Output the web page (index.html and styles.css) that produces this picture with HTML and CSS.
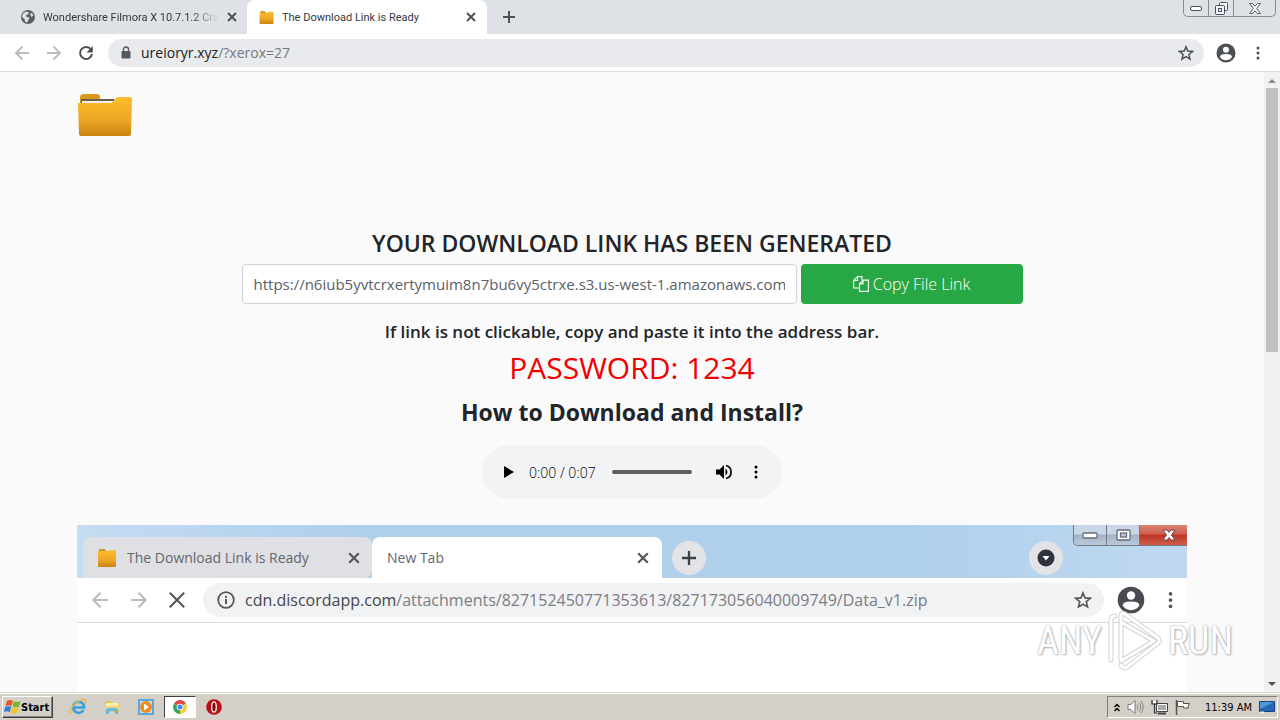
FILE: index.html
```html
<!DOCTYPE html>
<html lang="en">
<head>
<meta charset="utf-8">
<title>The Download Link is Ready</title>
<link rel="stylesheet" href="styles.css">
</head>
<body>
<svg class="defs" aria-hidden="true">
  <defs>
    <linearGradient id="gold" x1="0" y1="0" x2="0" y2="1">
      <stop offset="0" stop-color="#fdbf2d"/><stop offset=".6" stop-color="#eda525"/><stop offset="1" stop-color="#c98410"/>
    </linearGradient>
    <symbol id="folder" viewBox="0 0 56 44">
      <path d="M3 12V4q0-3 4-3h13q3 0 3 3v2h14v6z" fill="#d99a1c"/>
      <path d="M4 6h33v6H4z" fill="#69604a"/>
      <path d="M5 8h31v5H5z" fill="#f4f2ea"/>
      <path d="M1 10h32q3 0 5-4 1-2 4-2h11q2 0 2 2l-1 35q0 2-2 2H4q-2 0-2-2z" fill="url(#gold)"/>
    </symbol>
    <symbol id="close" viewBox="0 0 10 10"><path d="M1 1l8 8M9 1L1 9" fill="none" stroke="currentColor" stroke-width="1.9"/></symbol>
    <symbol id="arrow" viewBox="0 0 16 16"><path d="M15 8H2M8.500 1.500L2 8l6.500 6.500" fill="none" stroke="currentColor" stroke-width="1.800"/></symbol>
    <symbol id="plus" viewBox="0 0 12 12"><path d="M6 0v12M0 6h12" fill="none" stroke="currentColor" stroke-width="2"/></symbol>
    <symbol id="star" viewBox="0 0 16 16"><path d="M8 1.800l1.800 4.300 4.700.4-3.600 3 1.100 4.600L8 11.700l-4 2.400 1.100-4.600-3.600-3 4.700-.4z" fill="none" stroke="currentColor" stroke-width="1.500"/></symbol>
    <symbol id="person" viewBox="0 0 20 20">
      <circle cx="10" cy="10" r="9.500" fill="currentColor"/>
      <circle cx="10" cy="6.800" r="3" fill="#fff"/>
      <path d="M4 14q0-3 6-3t6 3q-2.200 3.300-6 3.300T4 14z" fill="#fff"/>
    </symbol>
    <symbol id="dots" viewBox="0 0 4 16"><circle cx="2" cy="3" r="1.500" fill="currentColor"/><circle cx="2" cy="8" r="1.500" fill="currentColor"/><circle cx="2" cy="13" r="1.500" fill="currentColor"/></symbol>
  </defs>
</svg>

<header class="browser">
  <nav class="tabs" aria-label="Tabs">
    <div class="tab">
      <svg class="favicon" viewBox="0 0 14 14"><circle cx="7" cy="7" r="7" fill="#5a5e63"/><path d="M2 3.500L5 1.500l3 1-1 2-2 .5.500 2 3 .5-1 2.500-1.500 2.500-2-1-.5-2.500L1 7zM9 4l2-1 1.500 2.500-2 1.500z" fill="#dee1e6"/></svg>
      <span class="tab-title fade">Wondershare Filmora X 10.7.1.2 Cra</span>
      <button class="icon-button" aria-label="Close tab"><svg class="s10"><use href="#close"/></svg></button>
    </div>
    <div class="tab active">
      <svg class="favicon wide" viewBox="0 0 16 16"><path d="M1 1h5l1 2h8v4H1z" fill="#d99a1c"/><path d="M0 4h9l1-2h6v13q0 1-1 1H1q-1 0-1-1z" fill="url(#gold)"/></svg>
      <span class="tab-title">The Download Link is Ready</span>
      <button class="icon-button" aria-label="Close tab"><svg class="s10"><use href="#close"/></svg></button>
    </div>
    <button class="icon-button new-tab" aria-label="New tab"><svg class="s12"><use href="#plus"/></svg></button>
    <div class="window-controls">
      <button aria-label="Minimize"><svg width="12" height="5" viewBox="0 0 12 5"><rect x=".5" y=".5" width="11" height="4" rx="1.500" fill="#fff" stroke="#4b4f5c"/></svg></button>
      <button aria-label="Restore"><svg width="13" height="13" viewBox="0 0 13 13"><g fill="#f4f5f8" stroke="#4b4f5c"><rect x="4.500" y=".5" width="8" height="8" rx="1"/><rect x=".5" y="3.500" width="9" height="9" rx="1"/><rect x="3.500" y="6.500" width="3" height="3"/></g></svg></button>
      <button class="wide" aria-label="Close window"><svg width="12" height="11" viewBox="0 0 12 11"><path d="M.7.5h3L6 3.300 8.300.5h3L7.700 5.500l3.600 5h-3L6 7.700 3.700 10.500h-3l3.600-5z" fill="#fff" stroke="#4b4f5c" stroke-width=".9"/></svg></button>
    </div>
  </nav>
  <div class="toolbar">
    <button class="icon-button pale" aria-label="Back"><svg class="s16"><use href="#arrow"/></svg></button>
    <button class="icon-button pale flip" aria-label="Forward"><svg class="s16"><use href="#arrow"/></svg></button>
    <button class="icon-button" aria-label="Reload"><svg class="s16" viewBox="0 0 16 16"><path d="M13 4.500A6 6 0 1 0 14 9" fill="none" stroke="currentColor" stroke-width="2"/><path d="M14.800 1v6.500H8.500z" fill="currentColor"/></svg></button>
    <div class="omnibox">
      <svg class="lock" viewBox="0 0 10 13"><path d="M2.500 6V3.500a2.500 2.500 0 0 1 5 0V6" fill="none" stroke="#55595e" stroke-width="1.400"/><rect x=".5" y="5" width="9" height="7.500" rx="1" fill="#55595e"/></svg>
      <span class="url"><b>ureioryr.xyz</b>/?xerox=27</span>
      <button class="icon-button" aria-label="Bookmark this page"><svg class="s16"><use href="#star"/></svg></button>
    </div>
    <button class="icon-button" aria-label="Profile"><svg class="s20"><use href="#person"/></svg></button>
    <button class="icon-button menu" aria-label="Menu"><svg class="dots"><use href="#dots"/></svg></button>
  </div>
</header>

<div class="viewport">
  <main class="page">
    <div class="container">
      <svg class="brand" role="img" aria-label="Folder"><use href="#folder"/></svg>
      <section class="download">
        <h1>YOUR DOWNLOAD LINK HAS BEEN GENERATED</h1>
        <form class="link-row">
          <input type="text" aria-label="Download link" value="https://n6iub5yvtcrxertymuim8n7bu6vy5ctrxe.s3.us-west-1.amazonaws.com">
          <button type="button" class="copy"><svg width="16" height="16" viewBox="0 0 16 16"><g fill="none" stroke="#fff" stroke-width="1.100"><path d="M6 12H.6V4.500L4.500.6H9v3.500M4.500.6v3.900H.6"/><path d="M10 4.100h5.400v11.300H6.500V7.900zM10 4.100v3.800H6.500"/></g></svg>Copy File Link</button>
        </form>
        <p class="hint">If link is not clickable, copy and paste it into the address bar.</p>
        <p class="password">PASSWORD: 1234</p>
        <h2>How to Download and Install?</h2>
        <div class="player">
          <button class="icon-button" aria-label="Play"><svg width="10" height="12" viewBox="0 0 10 12"><path d="M0 0l10 6-10 6z" fill="#000"/></svg></button>
          <span class="time">0:00 / 0:07</span>
          <input type="range" aria-label="Seek" value="0">
          <button class="icon-button" aria-label="Mute"><svg width="16" height="16" viewBox="0 0 16 16"><path d="M0 5.500h3.500L8 1v14l-4.500-4.500H0z" fill="#000"/><path d="M9.500 4.500q4 3.500 0 7z" fill="#000"/><path d="M10 1.500a6.700 6.700 0 0 1 0 13" fill="none" stroke="#000" stroke-width="1.700"/></svg></button>
          <button class="icon-button" aria-label="More options"><svg class="dots big"><use href="#dots"/></svg></button>
        </div>
      </section>

      <figure class="shot">
        <div class="shot-tabs">
          <div class="shot-tab">
            <svg class="shot-folder" viewBox="0 0 16 16"><path d="M1 0h5l1 2h8v4H1z" fill="#c9932d"/><path d="M0 2h9l1-1h6v14q0 1-1 1H1q-1 0-1-1z" fill="url(#gold)"/></svg>
            <span class="tab-title">The Download Link is Ready</span>
            <svg class="s12"><use href="#close"/></svg>
          </div>
          <div class="shot-tab current">
            <span class="tab-title">New Tab</span>
            <svg class="s12"><use href="#close"/></svg>
          </div>
          <span class="bubble"><svg class="s14"><use href="#plus"/></svg></span>
          <span class="bubble search"><svg width="18" height="18" viewBox="0 0 18 18"><circle cx="9" cy="9" r="8.500" fill="#30333b"/><path d="M5.500 7h7L9 11.500z" fill="#fff"/></svg></span>
          <div class="shot-controls">
            <span><svg width="16" height="7" viewBox="0 0 16 7"><rect x="1" y="1" width="14" height="5" rx="1" fill="#fff" stroke="#646b78" stroke-width="1.300"/></svg></span>
            <span><svg width="15" height="12" viewBox="0 0 15 12"><rect x="1" y="1" width="13" height="10" rx="1" fill="#fff" stroke="#646b78" stroke-width="1.300"/><rect x="4.500" y="4" width="6" height="4" fill="#b9c6d6" stroke="#646b78" stroke-width="1.300"/></svg></span>
            <span class="red"><svg width="14" height="12" viewBox="0 0 14 12"><path d="M1 1h4l2 2.500L9 1h4L9.500 6l3.500 5H9L7 8.500 5 11H1l3.500-5z" fill="#fff" stroke="#74454d"/></svg></span>
          </div>
        </div>
        <div class="shot-bar">
          <svg class="s18 pale"><use href="#arrow"/></svg>
          <svg class="s18 pale flip"><use href="#arrow"/></svg>
          <svg class="s16" viewBox="0 0 10 10"><path d="M.5.5l9 9M9.500.5l-9 9" fill="none" stroke="currentColor" stroke-width="1.300"/></svg>
          <div class="shot-omnibox">
            <svg class="s18" viewBox="0 0 18 18"><circle cx="9" cy="9" r="7.800" fill="none" stroke="currentColor" stroke-width="1.800"/><path d="M9 8v5M9 4.800v2" stroke="currentColor" stroke-width="2"/></svg>
            <span class="url"><b>cdn.discordapp.com</b>/attachments/827152450771353613/827173056040009749/Data_v1.zip</span>
            <svg class="s18"><use href="#star"/></svg>
          </div>
          <svg class="s28"><use href="#person"/></svg>
          <svg class="dots tall"><use href="#dots"/></svg>
        </div>
      </figure>
    </div>
  </main>
  <div class="scrollbar" aria-hidden="true">
    <svg width="8" height="4" viewBox="0 0 8 4"><path d="M4 0l4 4H0z" fill="#8c8c8c"/></svg>
    <span class="thumb"></span>
    <svg width="8" height="4" viewBox="0 0 8 4"><path d="M0 0h8L4 4z" fill="#505050"/></svg>
  </div>
</div>

<div class="watermark">
  <span>ANY</span>
  <svg width="56" height="62" viewBox="0 0 56 62"><g fill="none" stroke-linejoin="round" stroke-linecap="round"><path d="M14 50V6q0-4 4-2l33 24q3 3 0 5L20 57q-3 2-5 0l-1-2M14 12l33 19-33 20M4 50V10q0-4 4-4" stroke="#d2d2d2" stroke-width="5"/><path d="M14 50V6q0-4 4-2l33 24q3 3 0 5L20 57q-3 2-5 0l-1-2M14 12l33 19-33 20M4 50V10q0-4 4-4" stroke="#fff" stroke-width="3"/></g></svg>
  <span>RUN</span>
</div>

<footer class="taskbar">
  <button class="start"><svg width="17" height="16" viewBox="0 0 17 16"><path d="M3 2q3-2 6 0L7.500 7q-3-1.500-6 0z" fill="#e8542a"/><path d="M10 2.300q3 1.500 6.500 0L15 7.500q-3 1.500-6.500 0z" fill="#76b82a"/><path d="M1.200 8q3-1.500 6 0L5.700 13q-3-1.500-5.700 0z" fill="#2a7fd4"/><path d="M8.200 8.400q3 1.600 6.500 0L13 13.700q-3 1.500-6.300 0z" fill="#f6c21c"/></svg>Start</button>
  <nav class="launch" aria-label="Quick launch">
    <button aria-label="Internet Explorer"><svg viewBox="0 0 18 18"><path d="M14.500 12a5.500 5.500 0 1 1 .5-4v1.500H5" fill="none" stroke="#36a0df" stroke-width="2.600"/><path d="M2 15.500Q-.5 12 6 6t10.500-4q1 1-.7 4" fill="none" stroke="#e9b93a" stroke-width="1.400"/></svg></button>
    <button aria-label="Explorer"><svg viewBox="0 0 18 18"><path d="M2 3h6l1 2h7v9H2z" fill="#e8c45c"/><path d="M3 5h12v5H3z" fill="#fbeeb0"/><path d="M2 8h14v4H2z" fill="#f3d67a"/><path d="M3 16v-4q0-2 2-2h8q2 0 2 2v4h-3v-3H6v3z" fill="#63b9e4"/></svg></button>
    <button aria-label="Media Player"><svg viewBox="0 0 18 18"><path d="M1 1h16v16H1z" fill="#5aa7e0"/><path d="M3 3h12v12H3z" fill="#c8e4f8"/><circle cx="9" cy="9" r="6" fill="#f08a1b"/><path d="M7 5.500l5 3.500-5 3.500z" fill="#fff"/></svg></button>
    <button class="pressed" aria-label="Chrome"><svg viewBox="0 0 18 18"><path d="M9 9L3 5.500a7 7 0 0 1 12 0z" fill="#de4b3c"/><path d="M9 9l6-3.500A7 7 0 0 1 9 16z" fill="#f7cf3c"/><path d="M9 9v7A7 7 0 0 1 3 5.500z" fill="#38a156"/><circle cx="9" cy="9" r="3.300" fill="#fff"/><circle cx="9" cy="9" r="2.500" fill="#4285f4"/></svg></button>
    <button aria-label="Opera"><svg viewBox="0 0 18 18"><circle cx="9" cy="9" r="7.800" fill="#b31117"/><ellipse cx="9" cy="9" rx="2.300" ry="5" fill="#7a0509" stroke="#f3d9d9" stroke-width="1.500"/></svg></button>
  </nav>
  <div class="tray">
    <svg width="6" height="9" viewBox="0 0 6 9"><path d="M.5 4L3 1.500 5.500 4M.5 8L3 5.500 5.500 8" fill="none" stroke="#000" stroke-width="1.400"/></svg>
    <svg width="17" height="16" viewBox="0 0 17 16"><path d="M1 5.500h3L8 1.500v13l-4-4H1z" fill="#fff" stroke="#777"/><path d="M10 5.500q2 2.500 0 5M12 3.500q3.500 4.500 0 9M14 2q4.500 6 0 12" fill="none" stroke="#888"/></svg>
    <svg width="17" height="16" viewBox="0 0 17 16"><path d="M5.500 4.500h11v8h-11z" fill="#aaa" stroke="#444"/><path d="M6.500 5.500h9v6h-9z" fill="none" stroke="#fff"/><path d="M7 14.500h8" stroke="#444" stroke-width="2"/><path d="M1 1v4h5V1M3.500 5v9h3" fill="none" stroke="#333" stroke-width="1.200"/><path d="M2 2h3v2H2z" fill="#fff"/></svg>
    <svg width="16" height="16" viewBox="0 0 16 16"><path d="M1.500 1v15" stroke="#555" stroke-width="1.500"/><path d="M2.500 2.500h6v2h6l-1.500 3 .5 1.500h-5v-1.500h-6z" fill="#fff" stroke="#555"/></svg>
    <time>11:39 AM</time>
    <svg width="16" height="13" viewBox="0 0 16 13"><path d="M.5.500h15v10H.5z" fill="#2565b8" stroke="#16407e"/><path d="M1 1h14L1 8z" fill="#4f95da"/><path d="M1 11.500h4" stroke="#e6f0fa" stroke-width="2"/></svg>
  </div>
</footer>
</body>
</html>
```

FILE: styles.css
```css
* { box-sizing: border-box; }

body {
  margin: 0;
  height: 100vh;
  display: flex;
  flex-direction: column;
  overflow: hidden;
  position: relative;
  background: #fafafa;
  color: #212529;
  font-family: "Open Sans", "Noto Sans", sans-serif;
  font-size: 16px;
}

button { font: inherit; color: inherit; padding: 0; border: 0; background: none; }
svg { display: block; flex: none; }
.defs { position: absolute; width: 0; height: 0; }
h1, h2, p, figure { margin: 0; }

.s10 { width: 10px; height: 10px; }
.s12 { width: 12px; height: 12px; }
.s14 { width: 14px; height: 14px; }
.s16 { width: 16px; height: 16px; }
.s18 { width: 18px; height: 18px; }
.s20 { width: 20px; height: 20px; }
.s28 { width: 28px; height: 28px; }
.dots { width: 4px; height: 16px; }
.dots.big { height: 18px; }
.dots.tall { height: 20px; width: 5px; }
.flip { transform: scaleX(-1); }

.icon-button { display: flex; align-items: center; justify-content: center; flex: none; color: #4c5055; }
.icon-button.pale, .pale { color: #b9bbbe; }

/* Browser frame */
.tabs { display: flex; height: 34px; background: #dee1e6; }
.tab { display: flex; align-items: center; gap: 8px; width: 247px; padding: 0 10px 0 21px; border-radius: 0 0 8px 0; }
.tab.active { width: 240px; padding: 0 11px 0 12px; background: #fff; border-radius: 8px 8px 0 0; }
.favicon { width: 14px; height: 14px; }
.favicon.wide { width: 15px; height: 14px; }
.tab-title { flex: 1; overflow: hidden; white-space: nowrap; font-size: 11px; color: #33373c; }
.tab .tab-title { font-family: Roboto, sans-serif; }
.tab-title.fade { mask-image: linear-gradient(90deg, #000 84%, transparent); }
.new-tab { margin-left: 16px; }
.window-controls { display: flex; height: 17px; margin: 0 4px 0 auto; border: 1px solid #868b98; border-top: 0; border-radius: 0 0 5px 5px; }
.window-controls button { display: flex; align-items: center; justify-content: center; width: 25px; padding-top: 1px; border-right: 1px solid #868b98; }
.window-controls button.wide { width: 41px; border-right: 0; }

.toolbar { display: flex; align-items: center; gap: 14px; height: 38px; padding: 0 20px 0 14px; background: #fff; border-bottom: 1px solid #dcdde0; }
.toolbar > .icon-button + .icon-button { margin-left: 2px; }
.omnibox { flex: 1; display: flex; align-items: center; gap: 10px; height: 28px; margin-right: -2px; padding: 0 10px 0 13px; border-radius: 14px; background: #e8eaed; }
.toolbar > .menu.icon-button { margin-left: 6px; }
.lock { width: 10px; height: 13px; }
.url { flex: 1; font-size: 14px; color: #74787d; white-space: nowrap; }
.url b { font-weight: 400; color: #202124; }

/* Page */
.viewport { flex: 1; display: flex; min-height: 0; }
.page { flex: 1; overflow: hidden; background: #fafafa; }
.container { max-width: 1140px; margin: 0 auto; padding: 21px 15px 0; }
.brand { width: 56px; height: 44px; }
.download { display: flex; flex-direction: column; align-items: center; padding-top: 91px; text-align: center; }
h1 { font-size: 23px; line-height: 30px; font-weight: 600; }
.link-row { display: grid; grid-template-columns: 5fr 2fr; gap: 4px; width: 781px; max-width: 100%; margin: 6px 0 0; }
.link-row input { min-width: 0; height: 40px; padding: 0 11px; border: 1px solid #ced4da; border-radius: 4px; background: #fff; color: #5a6168; font: 15px "Open Sans", sans-serif; }
.copy { display: flex; align-items: center; justify-content: center; gap: 4px; height: 40px; border-radius: 4px; background: #28a745; color: #fff; font-weight: 300; font-size: 16px; }
.hint { margin-top: 16px; font-size: 17px; line-height: 24px; font-weight: 600; }
.password { margin-top: 5px; font-size: 30px; line-height: 38px; color: #f00000; }
h2 { margin-top: 10px; font-size: 23px; line-height: 30px; font-weight: 700; }

.player { display: flex; align-items: center; width: 300px; height: 54px; margin-top: 18px; padding: 0 24px 0 22px; border-radius: 27px; background: #f1f3f4; }
.player .time { margin: 0 16px 0 15px; font-size: 14px; font-weight: 300; color: #000; }
.player input { appearance: none; flex: 1; min-width: 0; height: 4px; margin: 0 24px 0 0; border-radius: 2px; background: #5f6062; }
.player input::-webkit-slider-thumb { appearance: none; width: 0; height: 0; }
.player .dots { margin-left: 22px; color: #000; }

/* Captured browser window */
.shot { margin-top: 26px; height: 700px; background: #fff; color: #5c5459; }
.shot-tabs { display: flex; align-items: flex-end; height: 53px; background: linear-gradient(90deg, #c5dcf2, #b0cfeb 25%, #b0cfeb 75%, #c0d9f1); }
.shot-tab { display: flex; align-items: center; gap: 10px; width: 289px; height: 41px; margin-left: 6px; padding: 0 12px 0 14px; border-radius: 8px 8px 8px 0; background: #dfe0e4; }
.shot-tab.current { width: 290px; margin-left: 0; padding-left: 15px; padding-right: 13px; background: #fff; border-radius: 8px 8px 0 0; }
.shot-tab .tab-title { font-family: inherit; font-size: 14px; color: #65656c; }
.shot-folder { width: 20px; height: 18px; }
.bubble { display: flex; align-items: center; justify-content: center; width: 34px; height: 34px; margin: 0 0 3px 10px; border-radius: 50%; background: #e2e3e7; color: #3c3f45; }
.bubble.search { margin-left: auto; margin-right: 10px; }
.shot-controls { display: flex; align-self: flex-start; width: 114px; height: 21px; border: 1px solid #717987; border-width: 0 0 1px 1px; border-radius: 0 0 0 5px; overflow: hidden; }
.shot-controls span { display: flex; align-items: center; justify-content: center; width: 33px; border-right: 1px solid #717987; background: linear-gradient(#c8d6e5 45%, #a3b3c7 50%, #bccadb); }
.shot-controls span.red { flex: 1; padding-left: 11px; border: 0; background: linear-gradient(#dc8575, #ce5e4e 45%, #bf3526 50%, #cf5d4c); }
.shot-bar { display: flex; align-items: center; gap: 21px; height: 45px; padding: 0 14px; border-bottom: 1px solid #d8dae0; }
.shot-omnibox { flex: 1; display: flex; align-items: center; gap: 10px; height: 34px; margin: 0 -8px 0 -3px; padding: 0 12px 0 14px; border-radius: 17px; background: #f1f2f4; }
.shot-omnibox .url { font-size: 16px; color: #7c7d82; }
.shot-omnibox .url b { color: #45454d; }
.shot-bar > .dots { margin-left: 2px; }
.shot-bar > .s28 { color: #4c4a51; }

/* Scrollbar */
.scrollbar { display: flex; flex-direction: column; align-items: center; width: 16px; padding: 7px 0; background: #f1f1f1; }
.thumb { width: 12px; height: 264px; margin: 5px 0 auto; background: #c1c1c1; }

.watermark { position: absolute; right: 47px; bottom: 48px; display: flex; align-items: center; gap: 5px; color: #fff; font: 38px "Roboto Condensed", "Liberation Sans Narrow", Roboto, sans-serif; text-shadow: 0 0 2px #999, 1px 1px 2px #bbb; }

/* Taskbar */
.taskbar { display: flex; align-items: center; height: 27px; padding: 0 2px; border-top: 1px solid #fff; background: #d4d0c8; box-shadow: 0 -1px #d4d0c8; color: #000; font-family: "DejaVu Sans Condensed", "DejaVu Sans", sans-serif; }
.start { display: flex; align-items: center; height: 22px; padding: 0 3px 0 1px; border: 1px solid; border-color: #fff #404040 #404040 #fff; box-shadow: inset -1px -1px #808080; font-size: 11px; font-weight: 700; }
.launch { display: flex; gap: 2px; margin-left: 9px; }
.launch button { display: flex; align-items: center; justify-content: center; width: 32px; height: 22px; }
.launch svg { width: 18px; height: 18px; }
.launch .pressed { border: 1px solid; border-color: #404040 #fff #fff #404040; background: #fff; }
.tray { display: flex; align-items: center; gap: 7px; height: 22px; margin-left: auto; padding: 0 2px 0 6px; border: 1px solid; border-color: #808080 #fff #fff #808080; }
time { margin-left: 7px; font-size: 11px; }
```
